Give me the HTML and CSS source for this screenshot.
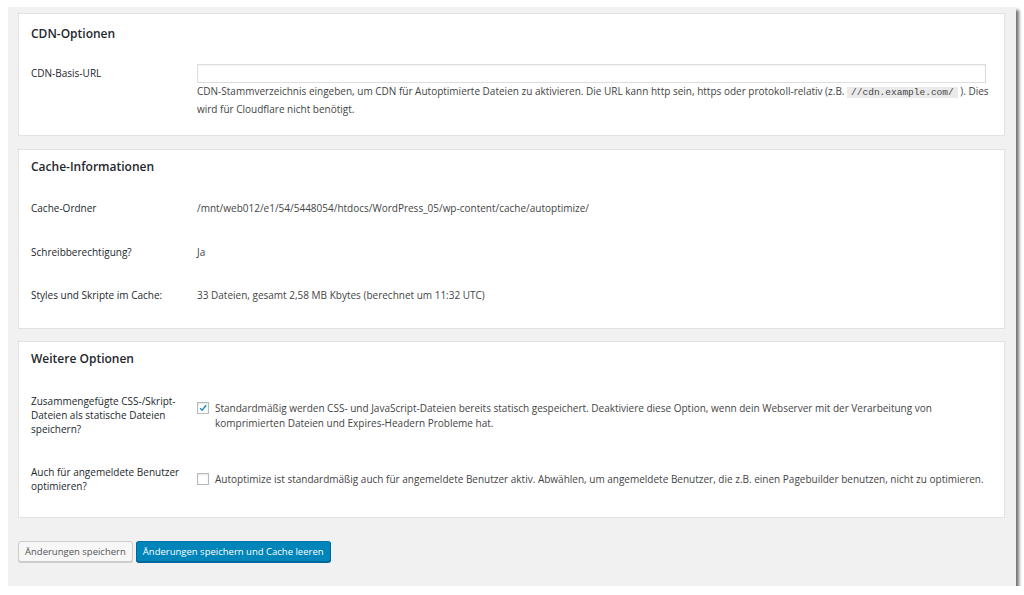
FILE: index.html
```html
<!DOCTYPE html>
<html lang="de">
<head>
    <meta charset="UTF-8">
    <meta name="viewport" content="width=device-width, initial-scale=1.0">
    <title>Autoptimize – Zusätzliche Einstellungen</title>
    <link rel="stylesheet" href="styles.css">
</head>
<body>

<div class="frame">

    <div class="card card-cdn">
        <h2>CDN-Optionen</h2>
        <div class="row">
            <div class="label">CDN-Basis-URL</div>
            <div class="field">
                <input type="text" class="url-input">
                <p class="desc">CDN-Stammverzeichnis eingeben, um CDN für Autoptimierte Dateien zu aktivieren. Die URL kann http sein, https oder protokoll-relativ (z.B. <code>//cdn.example.com/</code> ). Dies wird für Cloudflare nicht benötigt.</p>
            </div>
        </div>
    </div>

    <div class="card card-cache">
        <h2>Cache-Informationen</h2>
        <div class="row info">
            <div class="label">Cache-Ordner</div>
            <div class="field">/mnt/web012/e1/54/5448054/htdocs/WordPress_05/wp-content/cache/autoptimize/</div>
        </div>
        <div class="row info">
            <div class="label">Schreibberechtigung?</div>
            <div class="field">Ja</div>
        </div>
        <div class="row info">
            <div class="label">Styles und Skripte im Cache:</div>
            <div class="field">33 Dateien, gesamt 2,58 MB Kbytes (berechnet um 11:32 UTC)</div>
        </div>
    </div>

    <div class="card card-more">
        <h2>Weitere Optionen</h2>
        <div class="row opt">
            <div class="label">Zusammengefügte CSS-/Skript-Dateien als statische Dateien speichern?</div>
            <label class="field check">
                <span class="box">
                    <svg viewBox="0 0 12 12" width="12" height="12"><path d="M2.5 6.2 L5 8.6 L9.8 2.8" fill="none" stroke="#1e8cbe" stroke-width="1.8"/></svg>
                </span>
                <span>Standardmäßig werden CSS- und JavaScript-Dateien bereits statisch gespeichert. Deaktiviere diese Option, wenn dein Webserver mit der Verarbeitung von komprimierten Dateien und Expires-Headern Probleme hat.</span>
            </label>
        </div>
        <div class="row opt">
            <div class="label">Auch für angemeldete Benutzer optimieren?</div>
            <label class="field check">
                <span class="box"></span>
                <span>Autoptimize ist standardmäßig auch für angemeldete Benutzer aktiv. Abwählen, um angemeldete Benutzer, die z.B. einen Pagebuilder benutzen, nicht zu optimieren.</span>
            </label>
        </div>
    </div>

    <div class="actions">
        <button class="btn">Änderungen speichern</button>
        <button class="btn btn-primary">Änderungen speichern und Cache leeren</button>
    </div>

</div>

</body>
</html>
```

FILE: styles.css
```css
body {
    margin: 0;
    background: #fff;
    font-family: "Open Sans", "Noto Sans", sans-serif;
    font-size: 10px;
    color: #444;
}
.frame {
    margin: 7px 0 0 8px;
    width: 1008px;
    height: 579px;
    box-sizing: border-box;
    padding: 6px 11px 0 10px;
    background: #f1f1f1;
    box-shadow: 3px 3px 3px rgba(0,0,0,.55);
}
.card {
    background: #fff;
    border: 1px solid #e2e2e2;
    padding: 0 12px;
    margin-bottom: 12px;
}
.card h2 {
    margin: 0;
    font-size: 12px;
    font-weight: 600;
    color: #23282d;
    line-height: 20px;
}
.row {
    display: grid;
    grid-template-columns: 166px 1fr;
}
.label {
    color: #23282d;
    line-height: 14px;
}

/* CDN */
.card-cdn {
    padding-top: 10px;
    padding-bottom: 17px;
    margin-bottom: 13px;
}
.card-cdn .row {
    margin-top: 20px;
}
.card-cdn .label {
    padding-top: 2px;
}
.url-input {
    display: block;
    width: 789px;
    height: 19px;
    box-sizing: border-box;
    margin: 0;
    border: 1px solid #ddd;
    box-shadow: inset 0 1px 2px rgba(0,0,0,.05);
}
.desc {
    margin: 0;
    line-height: 17px;
}
code {
    font-family: "Liberation Mono", monospace;
    font-size: 9.5px;
    background: #eaeaea;
    padding: 0 4px;
}

/* cache */
.card-cache {
    padding-top: 7px;
    padding-bottom: 26px;
}
.info {
    line-height: 14px;
    margin-top: 24px;
}
.info + .info {
    margin-top: 29.5px;
}

/* weitere */
.card-more {
    padding-top: 7px;
    padding-bottom: 24px;
}
.opt {
    margin-top: 25px;
}
.opt + .opt {
    margin-top: 29px;
}
.opt .label {
    padding-right: 14px;
}
.check {
    display: flex;
    align-items: flex-start;
    gap: 6px;
    line-height: 15px;
    margin-top: 7px;
}
.box {
    flex: none;
    width: 12px;
    height: 12px;
    box-sizing: border-box;
    border: 1px solid #b4b9be;
    background: #fff;
    margin-top: 1px;
    box-shadow: inset 0 1px 2px rgba(0,0,0,.1);
    display: flex;
    align-items: center;
    justify-content: center;
}
.box svg {
    display: block;
}

.actions {
    display: flex;
    gap: 3px;
    margin-top: 23px;
}
.btn {
    font-family: inherit;
    font-size: 9.5px;
    height: 21px;
    padding: 0 6px;
    border: 1px solid #ccc;
    border-radius: 3px;
    background: #f7f7f7;
    color: #555;
    box-shadow: 0 1px 0 #ccc;
    cursor: pointer;
}
.btn-primary {
    background: #0085ba;
    border-color: #0073aa #006799 #006799;
    color: #fff;
    box-shadow: 0 1px 0 #006799;
}
```
